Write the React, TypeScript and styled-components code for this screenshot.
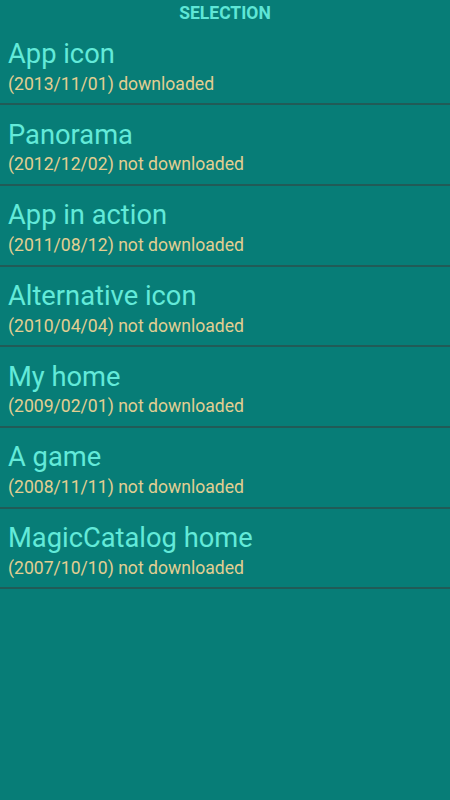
import React from 'react'
import styled, { createGlobalStyle } from 'styled-components'

const GlobalStyle = createGlobalStyle`
  html, body {
    margin: 0;
    padding: 0;
    background: #077d77;
    font-family: Roboto, "Noto Sans", sans-serif;
  }
`

const Screen = styled.div`
  width: 450px;
  height: 800px;
  background: #077d77;
  display: flex;
  flex-direction: column;
`

const Header = styled.div`
  height: 24.5px;
  display: flex;
  align-items: center;
  justify-content: center;
  color: #5fe6d6;
  font-size: 17.5px;
  font-weight: 700;
  padding-top: 1px;
  box-sizing: border-box;
`

const List = styled.ul`
  list-style: none;
  margin: 0;
  padding: 0;
`

const Row = styled.li`
  height: 80.7px;
  padding-left: 8px;
  padding-top: 12.5px;
  box-sizing: border-box;
  display: flex;
  flex-direction: column;
  border-bottom: 2px solid #215b57;
`

const Title = styled.div`
  color: #63ead9;
  font-size: 27.3px;
  line-height: 34px;
`

const Sub = styled.div`
  color: #e2cf92;
  font-size: 17.6px;
  line-height: 22px;
  margin-top: 1.5px;
`

const items = [
  ['App icon', '(2013/11/01) downloaded'],
  ['Panorama', '(2012/12/02) not downloaded'],
  ['App in action', '(2011/08/12) not downloaded'],
  ['Alternative icon', '(2010/04/04) not downloaded'],
  ['My home', '(2009/02/01) not downloaded'],
  ['A game', '(2008/11/11) not downloaded'],
  ['MagicCatalog home', '(2007/10/10) not downloaded'],
]

export default function App() {
  return (
    <Screen>
      <GlobalStyle />
      <Header>SELECTION</Header>
      <List>
        {items.map(([t, s]) => (
          <Row key={t}>
            <Title>{t}</Title>
            <Sub>{s}</Sub>
          </Row>
        ))}
      </List>
    </Screen>
  )
}
